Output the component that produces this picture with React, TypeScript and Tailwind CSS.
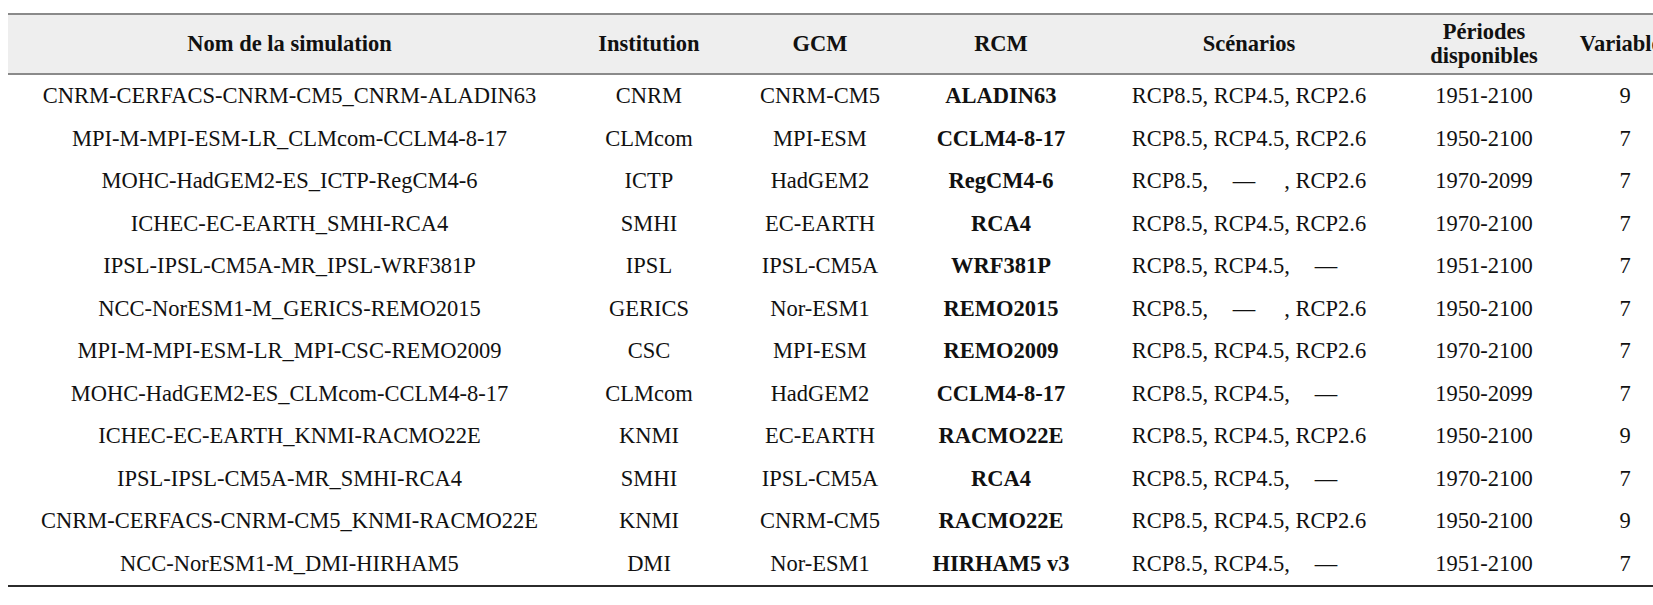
import React from 'react';

interface Simulation {
  name: string;
  institution: string;
  gcm: string;
  rcm: string;
  scenarios: [boolean, boolean, boolean]; // RCP8.5, RCP4.5, RCP2.6
  period: string;
  variables: number;
}

const simulations: Simulation[] = [
  { name: 'CNRM-CERFACS-CNRM-CM5_CNRM-ALADIN63', institution: 'CNRM', gcm: 'CNRM-CM5', rcm: 'ALADIN63', scenarios: [true, true, true], period: '1951-2100', variables: 9 },
  { name: 'MPI-M-MPI-ESM-LR_CLMcom-CCLM4-8-17', institution: 'CLMcom', gcm: 'MPI-ESM', rcm: 'CCLM4-8-17', scenarios: [true, true, true], period: '1950-2100', variables: 7 },
  { name: 'MOHC-HadGEM2-ES_ICTP-RegCM4-6', institution: 'ICTP', gcm: 'HadGEM2', rcm: 'RegCM4-6', scenarios: [true, false, true], period: '1970-2099', variables: 7 },
  { name: 'ICHEC-EC-EARTH_SMHI-RCA4', institution: 'SMHI', gcm: 'EC-EARTH', rcm: 'RCA4', scenarios: [true, true, true], period: '1970-2100', variables: 7 },
  { name: 'IPSL-IPSL-CM5A-MR_IPSL-WRF381P', institution: 'IPSL', gcm: 'IPSL-CM5A', rcm: 'WRF381P', scenarios: [true, true, false], period: '1951-2100', variables: 7 },
  { name: 'NCC-NorESM1-M_GERICS-REMO2015', institution: 'GERICS', gcm: 'Nor-ESM1', rcm: 'REMO2015', scenarios: [true, false, true], period: '1950-2100', variables: 7 },
  { name: 'MPI-M-MPI-ESM-LR_MPI-CSC-REMO2009', institution: 'CSC', gcm: 'MPI-ESM', rcm: 'REMO2009', scenarios: [true, true, true], period: '1970-2100', variables: 7 },
  { name: 'MOHC-HadGEM2-ES_CLMcom-CCLM4-8-17', institution: 'CLMcom', gcm: 'HadGEM2', rcm: 'CCLM4-8-17', scenarios: [true, true, false], period: '1950-2099', variables: 7 },
  { name: 'ICHEC-EC-EARTH_KNMI-RACMO22E', institution: 'KNMI', gcm: 'EC-EARTH', rcm: 'RACMO22E', scenarios: [true, true, true], period: '1950-2100', variables: 9 },
  { name: 'IPSL-IPSL-CM5A-MR_SMHI-RCA4', institution: 'SMHI', gcm: 'IPSL-CM5A', rcm: 'RCA4', scenarios: [true, true, false], period: '1970-2100', variables: 7 },
  { name: 'CNRM-CERFACS-CNRM-CM5_KNMI-RACMO22E', institution: 'KNMI', gcm: 'CNRM-CM5', rcm: 'RACMO22E', scenarios: [true, true, true], period: '1950-2100', variables: 9 },
  { name: 'NCC-NorESM1-M_DMI-HIRHAM5', institution: 'DMI', gcm: 'Nor-ESM1', rcm: 'HIRHAM5 v3', scenarios: [true, true, false], period: '1951-2100', variables: 7 },
];

const labels = ['RCP8.5', 'RCP4.5', 'RCP2.6'];

// same column template for header and rows
const cols = 'grid grid-cols-[563px_156px_186px_176px_320px_150px_132px]';

// a missing scenario keeps its slot width, with a dash roughly in the middle
function Scenario({ label, available }: { label: string; available: boolean }) {
  if (available) return <span>{label}</span>;
  return (
    <span className="inline-grid">
      <span className="invisible col-start-1 row-start-1">{label}</span>
      <span className="col-start-1 row-start-1 text-center pr-[10px]">—</span>
    </span>
  );
}

function Scenarios({ flags }: { flags: [boolean, boolean, boolean] }) {
  return (
    <span className="whitespace-pre">
      <Scenario label={labels[0]} available={flags[0]} />
      {', '}
      <Scenario label={labels[1]} available={flags[1]} />
      {', '}
      <Scenario label={labels[2]} available={flags[2]} />
    </span>
  );
}

export default function App() {
  return (
    <div className="w-[1653px] h-[605px] overflow-hidden bg-white pt-[13px] pl-[8px] text-[#111111] text-[22.5px] font-['Liberation_Serif','Times_New_Roman',serif]">
      <div className="w-[1683px]">
        {/* Header */}
        <div className={`${cols} h-[62px] items-center text-center font-bold leading-[24px] bg-[#eeeeee] border-y-2 border-[#8a8a8a]`}>
          <div>Nom de la simulation</div>
          <div>Institution</div>
          <div>GCM</div>
          <div>RCM</div>
          <div>Scénarios</div>
          <div>
            Périodes
            <br />
            disponibles
          </div>
          <div>Variables</div>
        </div>

        {/* Rows */}
        <div className="border-b-2 border-[#2b2b2b]">
          {simulations.map((sim) => (
            <div key={sim.name} className={`${cols} h-[42.5px] items-center text-center leading-none`}>
              <div>{sim.name}</div>
              <div>{sim.institution}</div>
              <div>{sim.gcm}</div>
              <div className="font-bold">{sim.rcm}</div>
              <div>
                <Scenarios flags={sim.scenarios} />
              </div>
              <div>{sim.period}</div>
              <div>{sim.variables}</div>
            </div>
          ))}
        </div>
      </div>
    </div>
  );
}
